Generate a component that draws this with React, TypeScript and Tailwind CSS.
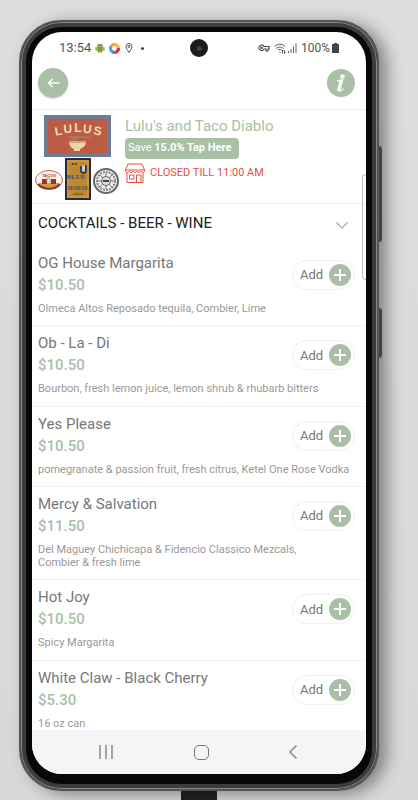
import type { ReactNode } from 'react';

type MenuItem = {
  name: string;
  price: string;
  description: string;
};

const items: MenuItem[] = [
  { name: 'OG House Margarita', price: '$10.50', description: 'Olmeca Altos Reposado tequila, Combier, Lime' },
  { name: 'Ob - La - Di', price: '$10.50', description: 'Bourbon, fresh lemon juice, lemon shrub & rhubarb bitters' },
  { name: 'Yes Please', price: '$10.50', description: 'pomegranate & passion fruit, fresh citrus, Ketel One Rose Vodka' },
  { name: 'Mercy & Salvation', price: '$11.50', description: 'Del Maguey Chichicapa & Fidencio Classico Mezcals,\nCombier & fresh lime' },
  { name: 'Hot Joy', price: '$10.50', description: 'Spicy Margarita' },
  { name: 'White Claw - Black Cherry', price: '$5.30', description: '16 oz can' },
];

function StatusBar() {
  return (
    <div className="flex h-8 shrink-0 items-center pl-[27px] pr-[27px] text-[13px] text-[#555]">
      <span>13:54</span>
      <svg className="ml-1 h-[10px] w-[10px]" viewBox="0 0 20 22" fill="#7d9f2c">
        <path d="M3 8a7 6 0 0 1 14 0zM4 9h12v8a2 2 0 0 1-2 2H6a2 2 0 0 1-2-2z" />
        <rect x="0" y="9" width="3" height="8" rx="1.5" />
        <rect x="17" y="9" width="3" height="8" rx="1.5" />
        <rect x="6" y="16" width="3" height="6" rx="1.5" />
        <rect x="11" y="16" width="3" height="6" rx="1.5" />
        <path d="M5 0l2 4M15 0l-2 4" stroke="#7d9f2c" />
      </svg>
      <svg className="ml-1 h-[11px] w-[11px]" viewBox="0 0 22 22" fill="none" strokeWidth="6">
        <path d="M4 7a8 8 0 0 1 9-4" stroke="#f3a12b" />
        <path d="M12 3a8 8 0 0 1 7 7" stroke="#f7b733" />
        <path d="M19 10a8 8 0 0 1-5 8" stroke="#d92c50" />
        <path d="M15 18a8 8 0 0 1-8 0" stroke="#e5405c" />
        <path d="M8 18a8 8 0 0 1-4-11" stroke="#35a9d6" />
      </svg>
      <svg className="ml-[5px] h-[10px] w-[8px]" viewBox="0 0 16 20" fill="none" stroke="#555" strokeWidth="2">
        <path d="M8 19C5 14 2 11 2 7a6 6 0 0 1 12 0c0 4-3 7-6 12z" />
        <circle cx="8" cy="7" r="2" />
      </svg>
      <span className="ml-2 h-[3px] w-[3px] rounded-full bg-[#444]" />
      <span className="ml-auto flex items-center">
        <svg className="h-[8px] w-[12px]" viewBox="0 0 24 16" fill="none" stroke="#444" strokeWidth="2.2">
          <path d="M12 5h10v5h-2v4h-4v-4h-4a5.5 5.5 0 1 1 0-5z" />
          <circle cx="7" cy="7.500" r="1.500" />
        </svg>
        <svg className="ml-1 h-[11px] w-[12px]" viewBox="0 0 24 22" fill="none" stroke="#555" strokeWidth="2">
          <path d="M1 7c6-6 15-6 21 0M4 11c5-4 10-4 15 0M8 14c3-2 5-2 7 0" />
          <path d="M11 17l2 2M17 14v7M21 21v-7M15 16l2-2M23 19l-2 2" />
        </svg>
        <svg className="ml-[2px] h-[10px] w-[9px]" viewBox="0 0 18 20" fill="none" stroke="#666" strokeWidth="2">
          <path d="M1 20v-4M6 20v-8M11 20V7M16 20V1" />
        </svg>
        <span className="ml-1 text-[12px]">100%</span>
        <svg className="ml-[2px] h-[10px] w-[7px]" viewBox="0 0 14 20" fill="#444">
          <path d="M4 0h6v2h3a1 1 0 0 1 1 1v17H0V3a1 1 0 0 1 1-1h3z" />
        </svg>
      </span>
    </div>
  );
}

function AppHeader() {
  return (
    <header className="flex h-[46px] shrink-0 items-start justify-between border-b border-[#eee] pl-[6px] pr-[11px] pt-1">
      <button type="button" aria-label="Back" className="flex h-[30px] w-[30px] items-center justify-center rounded-full bg-[#a9bfa6] shadow-sm">
        <svg className="h-[10px] w-[13px]" viewBox="0 0 26 20" fill="none" stroke="#fff" strokeWidth="3">
          <path d="M25 10H3M11 2l-8 8 8 8" />
        </svg>
      </button>
      <button type="button" aria-label="Information" className="mt-px h-7 w-7 rounded-full bg-[#a9bfa6]">
        <svg className="h-7 w-7" viewBox="0 0 28 28" fill="#fff">
          <circle cx="15.500" cy="7.500" r="2.300" />
          <path d="M10 11.500c2-1 4-1.200 6.500-1.200l-2.400 8.700c-.5 1.800.6 1.800 2.400.2l.5.700c-2 2.500-7.500 4.500-6.700.2l1.700-6.500c.3-1.200-.4-1.500-2-1.300z" />
        </svg>
      </button>
    </header>
  );
}

function Logos() {
  return (
    <svg className="h-[88px] w-[84px] shrink-0" viewBox="0 0 84 88" role="img" aria-label="Restaurant logos" fontFamily="'Liberation Sans', sans-serif">
      <rect x="9" y="1" width="67" height="42" fill="#6f7b90" />
      <rect x="13" y="5" width="59" height="34" fill="#bd5b47" />
      <g fill="#f0dfb0" fontSize="12" fontWeight="bold" textAnchor="middle">
        <text x="24" y="21" transform="rotate(-10 24 21)">L</text>
        <text x="33" y="19" transform="rotate(-4 33 19)">U</text>
        <text x="43" y="18">L</text>
        <text x="52" y="19" transform="rotate(4 52 19)">U</text>
        <text x="62" y="21" transform="rotate(10 62 21)">S</text>
      </g>
      <path d="M34 27h17c0 5-3 7-6 8v2h-6v-2c-3-1-5-3-5-8z" fill="#eed6a2" />
      <path d="M34 28h17" stroke="#a87f50" />
      <path d="M33 23h22M37 23v4M39 23v4M41 23v4" stroke="#aa8583" />

      <ellipse cx="14" cy="66" rx="13.500" ry="9.500" fill="#f9f3e9" stroke="#b8685a" />
      <path d="M4 69h20c-1 5-17 7-20 0z" fill="#d59a42" />
      <path d="M7 65h5v5H7zM16 65h5v5h-5z" fill="#9e3028" />
      <path d="M12 69V64h3v5" stroke="#c4935d" fill="none" />
      <path d="M3 70c5 6 17 6 22 0" stroke="#8b3a31" strokeWidth="2" fill="none" />
      <text x="14" y="63" fontSize="4" fontWeight="bold" fill="#b2443a" textAnchor="middle">TACOS</text>

      <rect x="31" y="45" width="24" height="40" fill="#bd8830" stroke="#292941" strokeWidth="2" />
      <rect x="33" y="47" width="20" height="36" fill="none" stroke="#d7a64b" />
      <path d="M37 50h6" stroke="#51483b" strokeWidth="2" strokeDasharray="2 1" />
      <g fontWeight="bold" fill="#4b526e" fontFamily="'Liberation Serif', serif" textAnchor="middle">
        <text x="41" y="65" fontSize="7">BLUE</text>
        <text x="43" y="76" fontSize="6">HORSE</text>
      </g>
      <path d="M46 52v4c0 4 5 4 5 0v-5" stroke="#35405f" strokeWidth="2" fill="#d1cdbd" />
      <path d="M38 80h10" stroke="#604a2a" />

      <circle cx="71" cy="67" r="12" fill="#eee" stroke="#666" strokeWidth="2" />
      <circle cx="71" cy="67" r="9" fill="none" stroke="#888" strokeWidth="2" strokeDasharray="2 1" />
      <path d="M71 59v16M63 67h16M65 61l12 12M77 61L65 73" stroke="#777" />
      <circle cx="71" cy="67" r="4.500" fill="#ddd" stroke="#666" />
      <path d="M68 67h6" stroke="#444" strokeWidth="2" />
    </svg>
  );
}

function Storefront() {
  return (
    <svg className="h-5 w-5" viewBox="0 0 20 20" fill="none" stroke="#df5145" strokeWidth="1">
      <path d="M3 1h14l2.500 6H.5z" />
      <path d="M.5 7v1c0 2 3.500 2 3.800 0 .3 2 3.500 2 3.800 0 .3 2 3.500 2 3.800 0 .3 2 3.500 2 3.800 0 .3 2 3.800 2 3.800 0V7" />
      <path d="M2 10v9.500h16V10M11.500 19v-7H16v7M4.500 12h4.500v4H4.500z" />
    </svg>
  );
}

function Restaurant() {
  return (
    <section className="flex h-[94px] shrink-0 items-start border-b border-[#eee] pl-[3px] pt-1">
      <Logos />
      <div className="flex flex-col items-start pl-[6px] pt-[2px]">
        <h1 className="text-[15px] leading-5 text-[#a9bfa6]">Lulu's and Taco Diablo</h1>
        <button type="button" className="mt-[2px] h-[21px] rounded bg-[#a9bfa6] pl-[3px] pr-2 text-[11px] text-white">
          Save <b>15.0% Tap Here</b>
        </button>
        <p className="mt-1 flex items-center gap-[5px] text-[11px] leading-5 text-[#df5145]">
          <Storefront />
          CLOSED TILL 11:00 AM
        </p>
      </div>
    </section>
  );
}

function AddButton({ name }: { name: string }) {
  return (
    <button
      type="button"
      aria-label={`Add ${name}`}
      className="flex h-[30px] w-[63px] shrink-0 items-center justify-between rounded-full border border-[#f0f0f0] pl-[7px] pr-[3px] text-[13px] text-[#777]"
    >
      Add
      <svg className="h-[22px] w-[22px]" viewBox="0 0 22 22">
        <circle cx="11" cy="11" r="11" fill="#a9bfa6" />
        <path d="M11 5v12M5 11h12" stroke="#fff" strokeWidth="2" />
      </svg>
    </button>
  );
}

function MenuRow({ item }: { item: MenuItem }) {
  return (
    <li className="grow border-b border-[#f0f0f0] pl-[6px] pr-[11px] pt-[7px] last:border-b-0">
      <div className="flex items-start justify-between">
        <div>
          <h3 className="text-[15px] leading-5 text-[#777]">{item.name}</h3>
          <p className="text-[15px] font-medium leading-6 text-[#a9bfa6]">{item.price}</p>
        </div>
        <div className="pt-[7px]">
          <AddButton name={item.name} />
        </div>
      </div>
      <p className="-mr-2 whitespace-pre-line pb-[10px] pt-[5px] text-[11px] leading-[13px] text-[#999] [li:last-child>&]:pb-0">
        {item.description}
      </p>
    </li>
  );
}

function SystemNav() {
  return (
    <nav className="flex h-11 shrink-0 items-center justify-between bg-[#f5f4f7] pl-[67px] pr-[69px]">
      <button type="button" aria-label="Recent apps">
        <svg className="h-[14px] w-[14px]" viewBox="0 0 14 14" stroke="#888" strokeWidth="1.500">
          <path d="M1 0v14M7 0v14M13 0v14" />
        </svg>
      </button>
      <button type="button" aria-label="Home" className="h-[15px] w-[15px] rounded-[5px] border border-[#777]" />
      <button type="button" aria-label="Back">
        <svg className="h-[14px] w-2" viewBox="0 0 8 14" fill="none" stroke="#888" strokeWidth="1.500">
          <path d="M7.500.5L1 7l6.500 6.500" />
        </svg>
      </button>
    </nav>
  );
}

function Phone({ children }: { children: ReactNode }) {
  return (
    <div className="relative flex grow flex-col rounded-[42px] border-2 border-[#555] bg-[#080808] px-[11px] pb-[15px] pt-[10px] shadow-[8px_3px_16px_rgba(0,0,0,0.4),inset_0_0_0_1px_#888,inset_0_0_0_5px_#3c3c3c]">
      <span className="absolute -right-[5px] top-[124px] h-[96px] w-[3px] rounded-r-sm bg-[#444]" />
      <span className="absolute -right-[5px] top-[286px] h-[50px] w-[3px] rounded-r-sm bg-[#444]" />
      <div className="relative flex grow flex-col overflow-hidden rounded-[30px] bg-white">
        {children}
        <span className="absolute left-1/2 top-[7px] flex h-[18px] w-[18px] -translate-x-1/2 items-center justify-center rounded-full bg-[#1c1c1c]">
          <span className="h-[5px] w-[5px] rounded-full bg-[#31464b]" />
        </span>
        <span className="absolute right-0 top-[142px] h-[106px] w-1 rounded-l-[4px] border border-r-0 border-[#bbb]" />
      </div>
    </div>
  );
}

export default function App() {
  return (
    <div className="flex min-h-screen flex-col bg-linear-to-b from-[#dddddd] to-[#d8d8d8] pl-[19px] pr-[39px] pt-5 font-['Roboto',sans-serif]">
      <Phone>
        <StatusBar />
        <AppHeader />
        <Restaurant />
        <main className="flex grow flex-col">
          <h2 className="flex h-[42px] shrink-0 items-center justify-between pb-[3px] pl-[6px] pr-[18px] text-[15px] text-[#222]">
            COCKTAILS - BEER - WINE
            <button type="button" aria-label="Collapse section" className="pt-1">
              <svg className="h-[7px] w-3" viewBox="0 0 12 7" fill="none" stroke="#a9bfa6" strokeWidth="1.500">
                <path d="M.5.5L6 6l5.500-5.500" />
              </svg>
            </button>
          </h2>
          <ul className="flex grow flex-col">
            {items.map((item) => (
              <MenuRow key={item.name} item={item} />
            ))}
          </ul>
        </main>
        <SystemNav />
      </Phone>
      <div className="ml-[162px] h-[9px] w-9 shrink-0 bg-[#222]" />
    </div>
  );
}
